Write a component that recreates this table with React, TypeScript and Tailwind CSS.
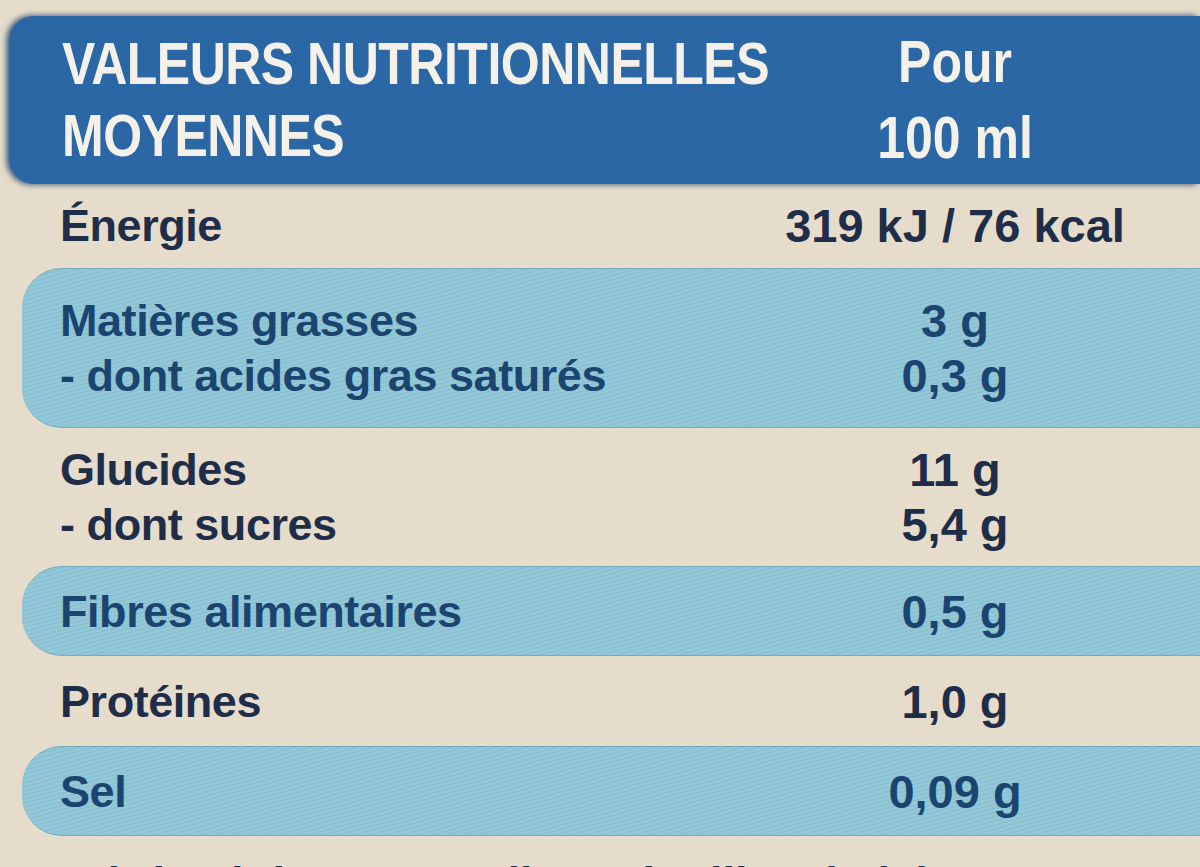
import React from 'react';

type Line = { label: string; value: string };

const rows: { band: boolean; h: string; lines: Line[] }[] = [
  { band: false, h: 'h-[82px]', lines: [{ label: 'Énergie', value: '319 kJ / 76 kcal' }] },
  {
    band: true,
    h: 'h-[160px]',
    lines: [
      { label: 'Matières grasses', value: '3 g' },
      { label: '- dont acides gras saturés', value: '0,3 g' },
    ],
  },
  {
    band: false,
    h: 'h-[134px]',
    lines: [
      { label: 'Glucides', value: '11 g' },
      { label: '- dont sucres', value: '5,4 g' },
    ],
  },
  { band: true, h: 'h-[90px]', lines: [{ label: 'Fibres alimentaires', value: '0,5 g' }] },
  { band: false, h: 'h-[86px]', lines: [{ label: 'Protéines', value: '1,0 g' }] },
  { band: true, h: 'h-[90px]', lines: [{ label: 'Sel', value: '0,09 g' }] },
];

export default function App() {
  return (
    <div className="w-[1200px] h-[867px] overflow-hidden bg-[#e6dccc] font-['Liberation_Sans',Arial,sans-serif]">
      {/* Header */}
      <div className="mt-[16px] ml-[10px] h-[168px] rounded-l-[24px] bg-[#2b66a5] shadow-[-3px_0_6px_#23466f] flex items-center text-[#f4f1ea] font-bold">
        <div className="w-[700px] shrink-0 pl-[52px] text-[50px] leading-[60px] tracking-[-0.01em] whitespace-nowrap scale-y-[1.2]">
          <div>VALEURS NUTRITIONNELLES</div>
          <div>MOYENNES</div>
        </div>
        <div className="flex-1 text-center text-[50px] leading-[63px] whitespace-nowrap scale-y-[1.2]">
          <div>Pour</div>
          <div>100 ml</div>
        </div>
      </div>

      {/* Rows */}
      {rows.map((row, i) => (
        <NutriRow key={i} {...row} />
      ))}

      {/* Bottom line, cut by the frame */}
      <div className="pl-[55px] pt-[22px] text-[45px] leading-none font-bold text-[#1f2f4a] whitespace-nowrap">
        Fabriqué dans un atelier qui utilise du lait
      </div>
    </div>
  );
}

function NutriRow({ band, h, lines }: { band: boolean; h: string; lines: Line[] }) {
  return (
    <div
      className={
        band
          ? `${h} ml-[22px] my-[2px] rounded-l-[40px] border-y border-[#74a9bb] bg-[repeating-linear-gradient(165deg,#92c8d8_0px,#92c8d8_2px,#86bccd_3px,#92c8d8_4px)] flex items-center text-[#1b456f]`
          : `${h} flex items-center text-[#1f2d48]`
      }
    >
      <div className={band ? 'w-[688px] pl-[38px]' : 'w-[710px] pl-[60px]'}>
        {lines.map((l) => (
          <div key={l.label} className="text-[45px] leading-[55px] font-bold tracking-[-0.01em]">
            {l.label}
          </div>
        ))}
      </div>
      <div className="flex-1 text-center">
        {lines.map((l) => (
          <div key={l.value} className="text-[47px] leading-[55px] font-bold">
            {l.value}
          </div>
        ))}
      </div>
    </div>
  );
}
